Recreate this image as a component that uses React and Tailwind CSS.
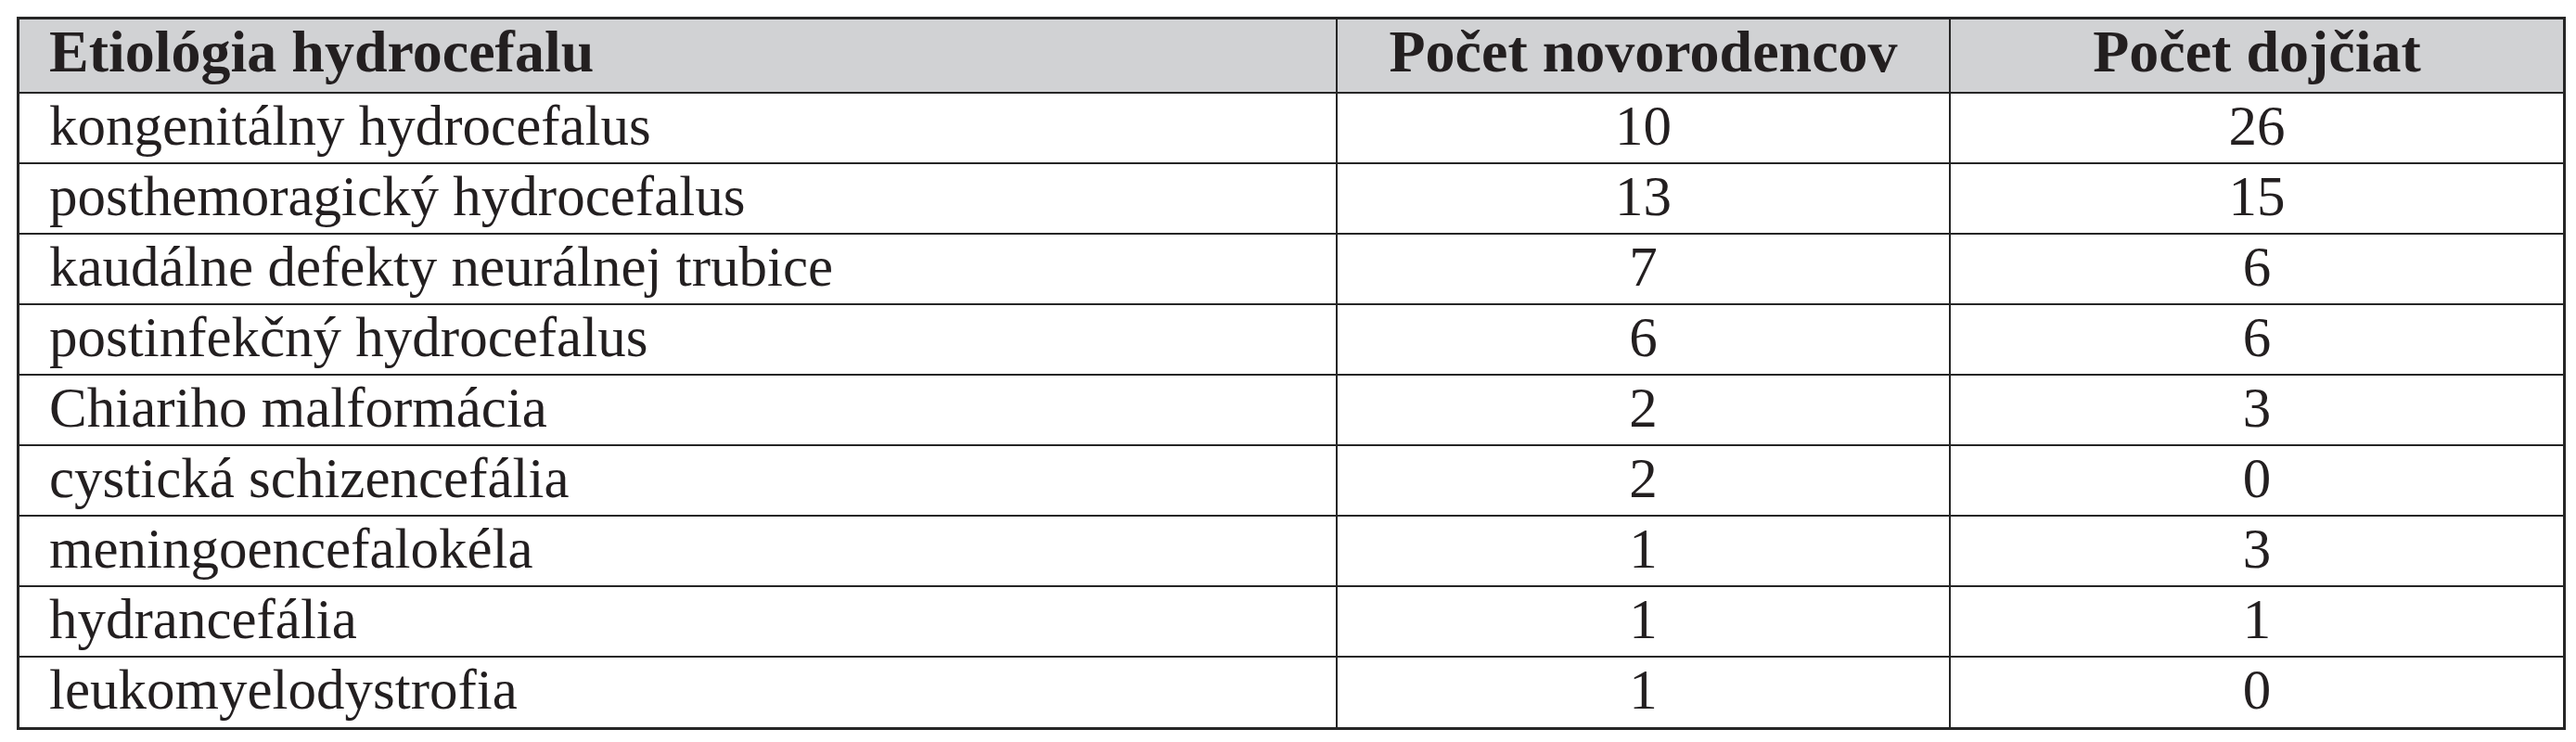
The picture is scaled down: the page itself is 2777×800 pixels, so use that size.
const rows = [
  ["kongenitálny hydrocefalus", "10", "26"],
  ["posthemoragický hydrocefalus", "13", "15"],
  ["kaudálne defekty neurálnej trubice", "7", "6"],
  ["postinfekčný hydrocefalus", "6", "6"],
  ["Chiariho malformácia", "2", "3"],
  ["cystická schizencefália", "2", "0"],
  ["meningoencefalokéla", "1", "3"],
  ["hydrancefália", "1", "1"],
  ["leukomyelodystrofia", "1", "0"],
];

const serif = { fontFamily: '"Liberation Serif", "Times New Roman", serif' };

export default function App() {
  return (
    <div className="min-h-screen bg-white pl-[18px] pt-[18px] text-[#231f20]" style={serif}>
      <div className="w-[2748px] border-[3px] border-[#262626]">
        {/* header */}
        <div className="grid h-[80px] grid-cols-[1419px_661px_1fr] border-b-2 border-[#262626] bg-[#d1d2d4] text-[64px] font-bold leading-none">
          <div className="flex items-center pb-[8px] pl-[32px]">Etiológia hydrocefalu</div>
          <div className="flex items-center justify-center border-l-2 border-[#262626] pb-[8px]">
            Počet novorodencov
          </div>
          <div className="flex items-center justify-center border-l-2 border-[#262626] pb-[8px]">
            Počet dojčiat
          </div>
        </div>

        {rows.map(([name, newborns, infants], i) => (
          <div
            key={name}
            className={`grid grid-cols-[1419px_661px_1fr] text-[61px] leading-none ${
              i < rows.length - 1 ? "h-[76px] border-b-2 border-[#262626]" : "h-[75px]"
            }`}
          >
            <div className="flex items-center pb-[6px] pl-[32px]">{name}</div>
            <div className="flex items-center justify-center border-l-2 border-[#262626] pb-[6px]">
              {newborns}
            </div>
            <div className="flex items-center justify-center border-l-2 border-[#262626] pb-[6px]">
              {infants}
            </div>
          </div>
        ))}
      </div>
    </div>
  );
}
